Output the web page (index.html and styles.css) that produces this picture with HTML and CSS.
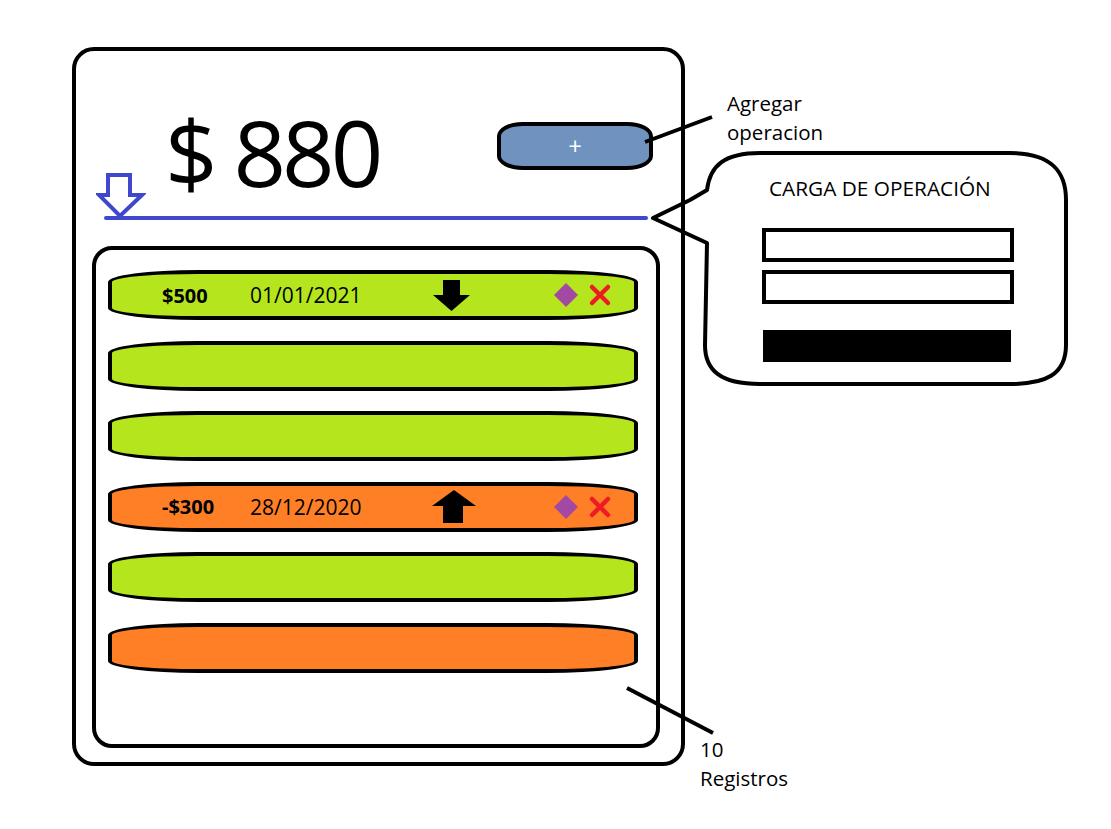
FILE: index.html
```html
<!DOCTYPE html>
<html lang="es">
<head>
  <meta charset="UTF-8" />
  <meta name="viewport" content="width=device-width,initial-scale=1" />
  <title>Balance wireframe</title>
  <link rel="stylesheet" href="styles.css">
</head>
<body>
  <div class="sheet">

    <!-- Main card -->
    <div class="card">
      <div class="balance">
        <span class="amount">$ 880</span>
        <button class="add-btn">+</button>
      </div>

      <div class="divider">
        <svg class="divider-arrow" width="50" height="50" viewBox="0 0 50 50">
          <path d="M12,5 H34 V25 H46 L24,46 L3,25 H12 Z" fill="#fff" stroke="#3f48cc" stroke-width="4" stroke-linejoin="miter"/>
        </svg>
      </div>

      <!-- Operations list -->
      <div class="list">
        <div class="row income">
          <span class="row-amount">$500</span>
          <span class="row-date">01/01/2021</span>
          <svg class="row-arrow" width="46" height="34" viewBox="0 0 46 34">
            <polygon points="12,2 29,2 29,17 39,17 20.5,33 2,17 12,17" fill="#000"/>
          </svg>
          <span class="row-actions">
            <svg width="24" height="24" viewBox="0 0 24 24"><polygon points="12,0 24,12 12,24 0,12" fill="#a349a4"/></svg>
            <svg width="24" height="24" viewBox="0 0 24 24"><path d="M4,4 L20,20 M20,4 L4,20" stroke="#ed1c24" stroke-width="4.5" stroke-linecap="round"/></svg>
          </span>
        </div>
        <div class="row income"></div>
        <div class="row income"></div>
        <div class="row expense">
          <span class="row-amount">-$300</span>
          <span class="row-date">28/12/2020</span>
          <svg class="row-arrow" width="46" height="34" viewBox="0 0 46 34">
            <polygon points="23,0 45,16 32,16 32,33 12,33 12,16 1,16" fill="#000"/>
          </svg>
          <span class="row-actions">
            <svg width="24" height="24" viewBox="0 0 24 24"><polygon points="12,0 24,12 12,24 0,12" fill="#a349a4"/></svg>
            <svg width="24" height="24" viewBox="0 0 24 24"><path d="M4,4 L20,20 M20,4 L4,20" stroke="#ed1c24" stroke-width="4.5" stroke-linecap="round"/></svg>
          </span>
        </div>
        <div class="row income"></div>
        <div class="row expense"></div>
      </div>
    </div>

    <!-- Annotations -->
    <div class="note note-add">Agregar<br>operacion</div>
    <div class="note note-count">10<br>Registros</div>

    <div class="bubble">
      <svg class="bubble-shape" width="420" height="238" viewBox="0 0 420 238">
        <path d="M57,93 L3,68 L40,50 L57,40 C60,15 75,3 110,3 L360,3 C400,3 416,20 416,50 L416,195 C416,225 395,234 360,234 L110,234 C70,234 55,220 55,195 Z" fill="#fff" stroke="#000" stroke-width="4" stroke-linejoin="round"/>
      </svg>
      <h3 class="bubble-title">CARGA DE OPERACIÓN</h3>
      <div class="field"></div>
      <div class="field second"></div>
      <div class="submit"></div>
    </div>

    <svg class="leaders" width="1111" height="829" viewBox="0 0 1111 829">
      <line x1="645" y1="142" x2="712" y2="117" stroke="#000" stroke-width="4"/>
      <line x1="627" y1="688" x2="713" y2="733" stroke="#000" stroke-width="4"/>
    </svg>

  </div>
</body>
</html>
```

FILE: styles.css
```css
body { margin: 0; background: #fff; font-family: "Open Sans", sans-serif; color: #000; }

.sheet {
  position: relative;
  width: 1111px; height: 829px;
  padding: 47px 0 0 72px;
  box-sizing: border-box;
  overflow: hidden;
}

/* Main card */
.card {
  display: flex; flex-direction: column;
  width: 613px; height: 719px;
  border: 4px solid #000; border-radius: 22px;
  box-sizing: border-box;
}
.balance {
  display: flex; justify-content: space-between; align-items: flex-start;
  padding: 55px 28px 0 89px;
}
.amount {
  font-size: 92px; line-height: 92px;
  letter-spacing: -4px;
}
.add-btn {
  width: 156px; height: 48px; margin-top: 16px; padding: 0;
  background: #7092be; color: #fff;
  border: 4px solid #000; border-radius: 26px / 14px;
  font-family: "Open Sans", sans-serif; font-size: 24px; line-height: 1;
}

/* Blue divider */
.divider {
  position: relative;
  width: 544px; height: 4px;
  margin: 18px 0 0 28px;
  background: #3f48cc; border-radius: 2px;
}
.divider-arrow { position: absolute; left: -8px; top: -46px; }

/* List */
.list {
  flex: 1;
  display: flex; flex-direction: column; gap: 20.5px;
  width: 568px;
  margin: 26px 0 14px 16px;
  padding: 20px 0 0 12px;
  border: 4px solid #000; border-radius: 20px;
  box-sizing: border-box;
}
.row {
  display: flex; align-items: center;
  width: 530px; height: 50px; flex: none;
  padding: 0 22px 0 50px;
  border: 4px solid #000; border-radius: 90px / 12px;
  box-sizing: border-box;
  font-size: 20px;
}
.row.income { background: #b5e61d; }
.row.expense { background: #ff7f27; }
.row-amount { width: 88px; font-weight: 700; }
.row-date { width: 181px; font-size: 21px; }
.row-arrow { display: block; }
.row-actions { margin-left: auto; display: flex; gap: 10px; align-items: center; }
.row-actions svg { display: block; }

/* Annotations */
.note {
  position: absolute;
  font-size: 20.5px; line-height: 29px;
}
.note-add { left: 727px; top: 89px; }
.note-count { left: 700px; top: 735px; }

.bubble {
  position: absolute; left: 650px; top: 150px;
  width: 420px; height: 238px;
  padding: 23.5px 0 0 112px;
  box-sizing: border-box;
}
.bubble-shape { position: absolute; left: 0; top: 0; z-index: -1; }
.bubble-title {
  margin: 0 0 0 7px;
  font-size: 20.8px; font-weight: 400; line-height: 28px;
}
.field {
  width: 252px; height: 34px;
  margin-top: 26.5px;
  border: 4px solid #000; box-sizing: border-box;
}
.field.second { margin-top: 8px; }
.submit {
  width: 248px; height: 32px;
  margin: 26px 0 0 1px;
  background: #000;
}

.leaders { position: absolute; left: 0; top: 0; pointer-events: none; }
```
